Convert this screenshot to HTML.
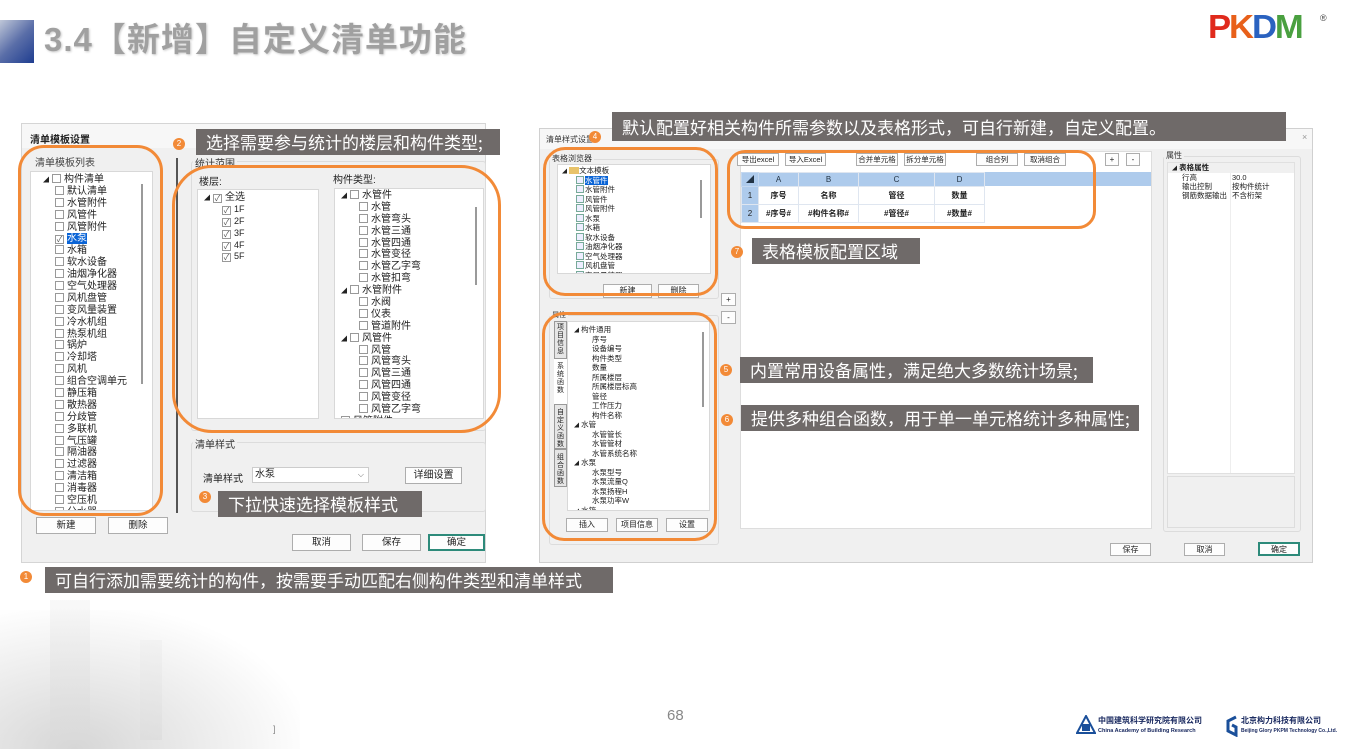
<!DOCTYPE html>
<html><head><meta charset="utf-8">
<style>
*{margin:0;padding:0;box-sizing:border-box}
body{width:1353px;height:749px;overflow:hidden;background:#fff;position:relative;font-family:"Liberation Sans","Noto Sans CJK SC",sans-serif;color:#222}
.a{position:absolute}
.dlg{font-size:10px}
.box{position:absolute;background:#fff;border:1px solid #d8d8d8}
.grp{position:absolute;border:1px solid #dcdcdc;border-radius:3px}
.lbl{position:absolute;background:#f0f0f0;padding:0 2px;font-size:10px;color:#333}
.btn{position:absolute;background:#fdfdfd;border:1px solid #adadad;font-size:9.5px;text-align:center;color:#222}
.org{position:absolute;border:3.5px solid #f28a37;border-radius:26px}
.call{position:absolute;background:#6f6a69;color:#fff;font-size:17px;line-height:26px;padding-left:10px;white-space:nowrap;font-family:"Noto Sans CJK SC",sans-serif}
.num{position:absolute;width:12px;height:12px;border-radius:50%;background:#f28a37;color:#fff;font-size:8px;line-height:12px;text-align:center}
.li{height:11.9px;line-height:11.9px;white-space:nowrap;position:relative}
.cb{display:inline-block;width:9px;height:9px;border:1px solid #999;background:#fff;vertical-align:-1px;margin-right:3px;font-size:8px;line-height:7px;text-align:center;color:#555}
.sm .li{height:9.5px;line-height:9.5px;font-size:7.5px}
.tb td{border:1px solid #dfe6f0;text-align:center;font-size:8px;font-weight:bold}
.ic{display:inline-block;width:8px;height:8px;border:1px solid #7a9;background:#eef;vertical-align:-1px;margin-right:1px}
</style></head><body>

<!-- header -->
<div class="a" style="left:0;top:20px;width:34px;height:43px;background:linear-gradient(135deg,#bfc7d8 0%,#5a6ea8 50%,#1f3d90 100%)"></div>
<div class="a" style="left:44px;top:13px;font-size:33px;font-weight:bold;color:#a0a0a0;text-shadow:1px 1px 2px #ccc;font-family:'Liberation Sans','Noto Sans CJK SC',sans-serif;letter-spacing:1px;white-space:nowrap">3.4【新增】自定义清单功能</div>
<div class="a" style="left:1208px;top:9px;font-size:33px;font-weight:900;font-family:'Liberation Sans',sans-serif;letter-spacing:-2px;line-height:36px;transform:scaleX(1.05);transform-origin:left"><span style="color:#e02a1c">P</span><span style="color:#e8601a">K</span><span style="color:#2a62c0">D</span><span style="color:#4aa040">M</span></div>
<div class="a" style="left:1320px;top:13px;font-size:9px;color:#444">®</div>

<!-- background building (subtle) -->
<div class="a" style="left:0;top:610px;width:300px;height:139px;background:radial-gradient(ellipse at 25% 100%,#d6d6d6 0%,#ececec 40%,rgba(255,255,255,0) 75%)"></div>
<div class="a" style="left:50px;top:600px;width:40px;height:140px;background:linear-gradient(rgba(240,240,240,0.6),#dadada);opacity:.7"></div>
<div class="a" style="left:140px;top:640px;width:22px;height:100px;background:linear-gradient(#f0f0f0,#dcdcdc);opacity:.7"></div>

<!-- LEFT DIALOG -->
<div class="a dlg" style="left:21px;top:123px;width:465px;height:440px;background:#f0f0f0;border:1px solid #d5d5d5">
  <div class="a" style="left:0;top:0;width:463px;height:24px;background:#f7f7f7"></div>
  <div class="a" style="left:8px;top:7px;font-weight:bold;font-size:10px">清单模板设置</div>
  <div class="a" style="left:13px;top:30px;font-size:10px;color:#444">清单模板列表</div>
  <div class="box" style="left:8px;top:47px;width:123px;height:340px;padding:2px 0 0 12px;overflow:hidden">
    <div class="li"><span style="font-size:6px;margin-right:3px">◢</span><span class="cb"></span>构件清单</div>
    <div style="padding-left:12px">
    <div class="li"><span class="cb"></span>默认清单</div><div class="li"><span class="cb"></span>水管附件</div><div class="li"><span class="cb"></span>风管件</div><div class="li"><span class="cb"></span>风管附件</div>
    <div class="li"><span class="cb">✓</span><span style="background:#0a64d6;color:#fff">水泵</span></div>
    <div class="li"><span class="cb"></span>水箱</div><div class="li"><span class="cb"></span>软水设备</div><div class="li"><span class="cb"></span>油烟净化器</div><div class="li"><span class="cb"></span>空气处理器</div><div class="li"><span class="cb"></span>风机盘管</div><div class="li"><span class="cb"></span>变风量装置</div><div class="li"><span class="cb"></span>冷水机组</div><div class="li"><span class="cb"></span>热泵机组</div><div class="li"><span class="cb"></span>锅炉</div><div class="li"><span class="cb"></span>冷却塔</div><div class="li"><span class="cb"></span>风机</div><div class="li"><span class="cb"></span>组合空调单元</div><div class="li"><span class="cb"></span>静压箱</div><div class="li"><span class="cb"></span>散热器</div><div class="li"><span class="cb"></span>分歧管</div><div class="li"><span class="cb"></span>多联机</div><div class="li"><span class="cb"></span>气压罐</div><div class="li"><span class="cb"></span>隔油器</div><div class="li"><span class="cb"></span>过滤器</div><div class="li"><span class="cb"></span>清洁箱</div><div class="li"><span class="cb"></span>消毒器</div><div class="li"><span class="cb"></span>空压机</div><div class="li"><span class="cb"></span>分水器</div>
    </div>
    <div class="a" style="left:110px;top:12px;width:2px;height:200px;background:#9a9a9a"></div>
  </div>
  <div class="a" style="left:154px;top:34px;width:2px;height:355px;background:#555"></div>
  <div class="btn" style="left:14px;top:393px;width:60px;height:17px;line-height:15px">新建</div>
  <div class="btn" style="left:86px;top:393px;width:60px;height:17px;line-height:15px">删除</div>

  <div class="grp" style="left:169px;top:37px;width:295px;height:270px"></div>
  <div class="lbl" style="left:171px;top:31px">统计范围</div>
  <div class="a" style="left:177px;top:49px">楼层:</div>
  <div class="a" style="left:311px;top:47px">构件类型:</div>
  <div class="box" style="left:175px;top:65px;width:122px;height:230px;padding:2px 0 0 6px">
    <div class="li"><span style="font-size:6px;margin-right:3px">◢</span><span class="cb">✓</span>全选</div>
    <div style="padding-left:18px;font-size:9px">
    <div class="li"><span class="cb">✓</span>1F</div><div class="li"><span class="cb">✓</span>2F</div><div class="li"><span class="cb">✓</span>3F</div><div class="li"><span class="cb">✓</span>4F</div><div class="li"><span class="cb">✓</span>5F</div></div>
  </div>
  <div class="box" style="left:312px;top:64px;width:150px;height:231px;padding:1px 0 0 6px;overflow:hidden">
    <div class="li"><span style="font-size:6px;margin-right:3px">◢</span><span class="cb"></span>水管件</div>
    <div style="padding-left:18px"><div class="li"><span class="cb"></span>水管</div><div class="li"><span class="cb"></span>水管弯头</div><div class="li"><span class="cb"></span>水管三通</div><div class="li"><span class="cb"></span>水管四通</div><div class="li"><span class="cb"></span>水管变径</div><div class="li"><span class="cb"></span>水管乙字弯</div><div class="li"><span class="cb"></span>水管扣弯</div></div>
    <div class="li"><span style="font-size:6px;margin-right:3px">◢</span><span class="cb"></span>水管附件</div>
    <div style="padding-left:18px"><div class="li"><span class="cb"></span>水阀</div><div class="li"><span class="cb"></span>仪表</div><div class="li"><span class="cb"></span>管道附件</div></div>
    <div class="li"><span style="font-size:6px;margin-right:3px">◢</span><span class="cb"></span>风管件</div>
    <div style="padding-left:18px"><div class="li"><span class="cb"></span>风管</div><div class="li"><span class="cb"></span>风管弯头</div><div class="li"><span class="cb"></span>风管三通</div><div class="li"><span class="cb"></span>风管四通</div><div class="li"><span class="cb"></span>风管变径</div><div class="li"><span class="cb"></span>风管乙字弯</div></div>
    <div class="li"><span class="cb"></span>风管附件</div>
    <div class="a" style="left:140px;top:18px;width:2px;height:78px;background:#9a9a9a"></div>
  </div>

  <div class="grp" style="left:169px;top:318px;width:295px;height:70px"></div>
  <div class="lbl" style="left:171px;top:312px">清单样式</div>
  <div class="a" style="left:181px;top:346px">清单样式</div>
  <div class="a" style="left:230px;top:343px;width:117px;height:16px;background:#fff;border:1px solid #ccc;padding-left:2px;line-height:14px;font-size:10px">水泵<span style="position:absolute;right:4px;color:#666;font-size:8px">⌵</span></div>
  <div class="btn" style="left:383px;top:343px;width:57px;height:17px;line-height:15px;font-size:10px">详细设置</div>
  <div class="btn" style="left:270px;top:410px;width:59px;height:17px;line-height:15px">取消</div>
  <div class="btn" style="left:340px;top:410px;width:59px;height:17px;line-height:15px">保存</div>
  <div class="btn" style="left:406px;top:410px;width:57px;height:17px;line-height:14px;border:2px solid #2d8a7a">确定</div>
</div>

<div class="org" style="left:18px;top:145px;width:145px;height:371px"></div>
<div class="org" style="left:172px;top:165px;width:329px;height:268px;border-radius:40px"></div>

<div class="num" style="left:173px;top:138px">2</div>
<div class="call" style="left:196px;top:129px;width:304px">选择需要参与统计的楼层和构件类型;</div>
<div class="num" style="left:199px;top:491px">3</div>
<div class="call" style="left:218px;top:491px;width:204px">下拉快速选择模板样式</div>
<div class="num" style="left:20px;top:571px">1</div>
<div class="call" style="left:45px;top:567px;width:568px">可自行添加需要统计的构件，按需要手动匹配右侧构件类型和清单样式</div>

<!-- RIGHT DIALOG -->
<div class="a dlg" style="left:539px;top:128px;width:774px;height:435px;background:#f0f0f0;border:1px solid #d0d0d0">
  <div class="a" style="left:0;top:0;width:772px;height:20px;background:#f7f7f7"></div>
  <div class="a" style="left:6px;top:5px;font-size:8px;color:#333">清单样式设置</div>
  <div class="a" style="left:762px;top:3px;font-size:9px;color:#999">×</div>
  <div class="grp" style="left:9px;top:30px;width:170px;height:140px"></div>
  <div class="lbl" style="left:10px;top:24px;font-size:8px">表格浏览器</div>
  <div class="box sm" style="left:17px;top:35px;width:154px;height:110px;padding:1px 0 0 4px;overflow:hidden">
    <div class="li"><span style="font-size:5px">◢</span> <span style="display:inline-block;width:10px;height:7px;background:#e8c36a;vertical-align:-1px"></span>文本模板</div>
    <div style="padding-left:14px">
    <div class="li"><span class="ic"></span><span style="background:#0a64d6;color:#fff">水管件</span></div>
    <div class="li"><span class="ic"></span>水管附件</div>
    <div class="li"><span class="ic"></span>风管件</div>
    <div class="li"><span class="ic"></span>风管附件</div>
    <div class="li"><span class="ic"></span>水泵</div>
    <div class="li"><span class="ic"></span>水箱</div>
    <div class="li"><span class="ic"></span>软水设备</div>
    <div class="li"><span class="ic"></span>油烟净化器</div>
    <div class="li"><span class="ic"></span>空气处理器</div>
    <div class="li"><span class="ic"></span>风机盘管</div>
    <div class="li"><span class="ic"></span>变风量装置</div>
    </div>
    <div class="a" style="left:142px;top:15px;width:2px;height:38px;background:#999"></div>
  </div>
  <div class="btn" style="left:63px;top:155px;width:49px;height:14px;line-height:12px;font-size:8px">新建</div>
  <div class="btn" style="left:118px;top:155px;width:41px;height:14px;line-height:12px;font-size:8px">删除</div>
  <div class="btn" style="left:181px;top:164px;width:15px;height:13px;font-size:8px;line-height:11px">+</div>
  <div class="btn" style="left:181px;top:182px;width:15px;height:13px;font-size:8px;line-height:11px">-</div>

  <div class="grp" style="left:9px;top:186px;width:170px;height:230px"></div>
  <div class="lbl" style="left:10px;top:181px;font-size:7px">属性</div>
  <div class="a" style="left:14px;top:192px;width:13px;height:185px;font-size:7px;line-height:8px;text-align:center">
    <div style="border:1px solid #999;background:#e6e6e6;height:38px;padding-top:2px">项目信息</div>
    <div style="background:#fff;height:45px;padding-top:4px">系统函数</div>
    <div style="border:1px solid #999;background:#e6e6e6;height:45px;padding-top:4px">自定义函数</div>
    <div style="border:1px solid #999;background:#e6e6e6;height:38px;padding-top:4px">组合函数</div>
  </div>
  <div class="box sm" style="left:27px;top:192px;width:143px;height:190px;padding:3px 0 0 6px;overflow:hidden">
    <div class="li"><span style="font-size:5px">◢</span> 构件通用</div>
    <div style="padding-left:18px"><div class="li">序号</div><div class="li">设备编号</div><div class="li">构件类型</div><div class="li">数量</div><div class="li">所属楼层</div><div class="li">所属楼层标高</div><div class="li">管径</div><div class="li">工作压力</div><div class="li">构件名称</div></div>
    <div class="li"><span style="font-size:5px">◢</span> 水管</div>
    <div style="padding-left:18px"><div class="li">水管管长</div><div class="li">水管管材</div><div class="li">水管系统名称</div></div>
    <div class="li"><span style="font-size:5px">◢</span> 水泵</div>
    <div style="padding-left:18px"><div class="li">水泵型号</div><div class="li">水泵流量Q</div><div class="li">水泵扬程H</div><div class="li">水泵功率W</div></div>
    <div class="li"><span style="font-size:5px">◢</span> 水箱</div>
    <div style="padding-left:18px"><div class="li">水箱有效容积</div></div>
    <div class="a" style="left:134px;top:10px;width:2px;height:75px;background:#999"></div>
  </div>
  <div class="btn" style="left:26px;top:389px;width:42px;height:14px;line-height:12px;font-size:8px">插入</div>
  <div class="btn" style="left:76px;top:389px;width:42px;height:14px;line-height:12px;font-size:8px">项目信息</div>
  <div class="btn" style="left:126px;top:389px;width:42px;height:14px;line-height:12px;font-size:8px">设置</div>

  <div class="a" style="left:200px;top:22px;width:412px;height:378px;background:#fff;border:1px solid #ddd"></div>
  <div class="btn" style="left:197px;top:24px;width:42px;height:13px;font-size:7.5px;line-height:11px">导出excel</div>
  <div class="btn" style="left:245px;top:24px;width:41px;height:13px;font-size:7.5px;line-height:11px">导入Excel</div>
  <div class="btn" style="left:316px;top:24px;width:42px;height:13px;font-size:7.5px;line-height:11px">合并单元格</div>
  <div class="btn" style="left:364px;top:24px;width:42px;height:13px;font-size:7.5px;line-height:11px">拆分单元格</div>
  <div class="btn" style="left:436px;top:24px;width:42px;height:13px;font-size:7.5px;line-height:11px">组合列</div>
  <div class="btn" style="left:484px;top:24px;width:42px;height:13px;font-size:7.5px;line-height:11px">取消组合</div>
  <div class="btn" style="left:565px;top:24px;width:14px;height:13px;font-size:8px;line-height:11px">+</div>
  <div class="btn" style="left:586px;top:24px;width:14px;height:13px;font-size:8px;line-height:11px">-</div>
  <div class="a" style="left:201px;top:43px;width:410px;height:14px;background:#aecbec"></div>
  <table class="a tb" style="left:201px;top:43px;border-collapse:collapse">
    <tr style="height:14px;background:#aecbec;color:#234"><td style="width:17px;border-color:#c4d8f0">◢</td><td style="width:40px;font-weight:normal">A</td><td style="width:60px;font-weight:normal">B</td><td style="width:76px;font-weight:normal">C</td><td style="width:50px;font-weight:normal">D</td></tr>
    <tr style="height:18px"><td style="background:#aecbec;font-weight:normal">1</td><td>序号</td><td>名称</td><td>管径</td><td>数量</td></tr>
    <tr style="height:18px"><td style="background:#aecbec;font-weight:normal">2</td><td>#序号#</td><td>#构件名称#</td><td>#管径#</td><td>#数量#</td></tr>
  </table>

  <div class="grp" style="left:623px;top:27px;width:138px;height:376px"></div>
  <div class="lbl" style="left:624px;top:21px;font-size:8px">属性</div>
  <div class="a" style="left:627px;top:33px;width:128px;height:312px;background:#fff;border:1px solid #e0e0e0;font-size:7.5px">
    <div style="background:#f0f0f0;height:10px;line-height:10px;padding-left:4px"><span style="font-size:5px">◢</span> <b>表格属性</b></div>
    <div style="height:9px;line-height:9px;padding-left:14px">行高<span class="a" style="left:64px">30.0</span></div>
    <div style="height:9px;line-height:9px;padding-left:14px">输出控制<span class="a" style="left:64px">按构件统计</span></div>
    <div style="height:9px;line-height:9px;padding-left:14px">钢筋数据输出<span class="a" style="left:64px">不含桁架</span></div>
    <div class="a" style="left:62px;top:10px;width:1px;height:300px;background:#eee"></div>
  </div>
  <div class="a" style="left:627px;top:347px;width:128px;height:52px;border:1px solid #ddd;background:#f0f0f0"></div>
  <div class="btn" style="left:570px;top:414px;width:41px;height:13px;font-size:8px;line-height:11px">保存</div>
  <div class="btn" style="left:644px;top:414px;width:41px;height:13px;font-size:8px;line-height:11px">取消</div>
  <div class="btn" style="left:718px;top:413px;width:42px;height:14px;font-size:8px;line-height:11px;border:2px solid #2d8a7a">确定</div>
</div>

<div class="org" style="left:543px;top:147px;width:175px;height:149px;border-radius:22px"></div>
<div class="org" style="left:542px;top:312px;width:175px;height:229px;border-radius:22px"></div>
<div class="org" style="left:727px;top:150px;width:369px;height:79px;border-radius:18px"></div>

<div class="num" style="left:589px;top:131px">4</div>
<div class="call" style="left:612px;top:112px;width:674px;height:29px;line-height:29px">默认配置好相关构件所需参数以及表格形式，可自行新建，自定义配置。</div>
<div class="num" style="left:731px;top:246px">7</div>
<div class="call" style="left:752px;top:238px;width:168px">表格模板配置区域</div>
<div class="num" style="left:720px;top:364px">5</div>
<div class="call" style="left:740px;top:357px;width:353px">内置常用设备属性，满足绝大多数统计场景;</div>
<div class="num" style="left:721px;top:414px">6</div>
<div class="call" style="left:741px;top:405px;width:398px">提供多种组合函数，用于单一单元格统计多种属性;</div>

<!-- footer -->
<div class="a" style="left:667px;top:707px;font-size:15px;color:#888">68</div>
<div class="a" style="left:273px;top:724px;font-size:9px;color:#888">]</div>
<svg class="a" style="left:1076px;top:715px" width="20" height="20"><path d="M10 1 L19 18 L1 18 Z" fill="none" stroke="#1a4f9a" stroke-width="2"/><rect x="6" y="9" width="8" height="7" fill="#1a4f9a"/></svg>
<div class="a" style="left:1098px;top:716px;font-size:8px;font-weight:bold;color:#1a2a60;line-height:9px">中国建筑科学研究院有限公司<br><span style="font-size:5.5px">China Academy of Building Research</span></div>
<svg class="a" style="left:1224px;top:715px" width="16" height="22"><path d="M12 2 L4 6 L4 16 L12 20 L12 12 L8 10" fill="none" stroke="#1a4f9a" stroke-width="3"/></svg>
<div class="a" style="left:1241px;top:716px;font-size:8px;font-weight:bold;color:#1a2a60;line-height:9px">北京构力科技有限公司<br><span style="font-size:5px">Beijing Glory PKPM Technology Co.,Ltd.</span></div>
</body></html>
